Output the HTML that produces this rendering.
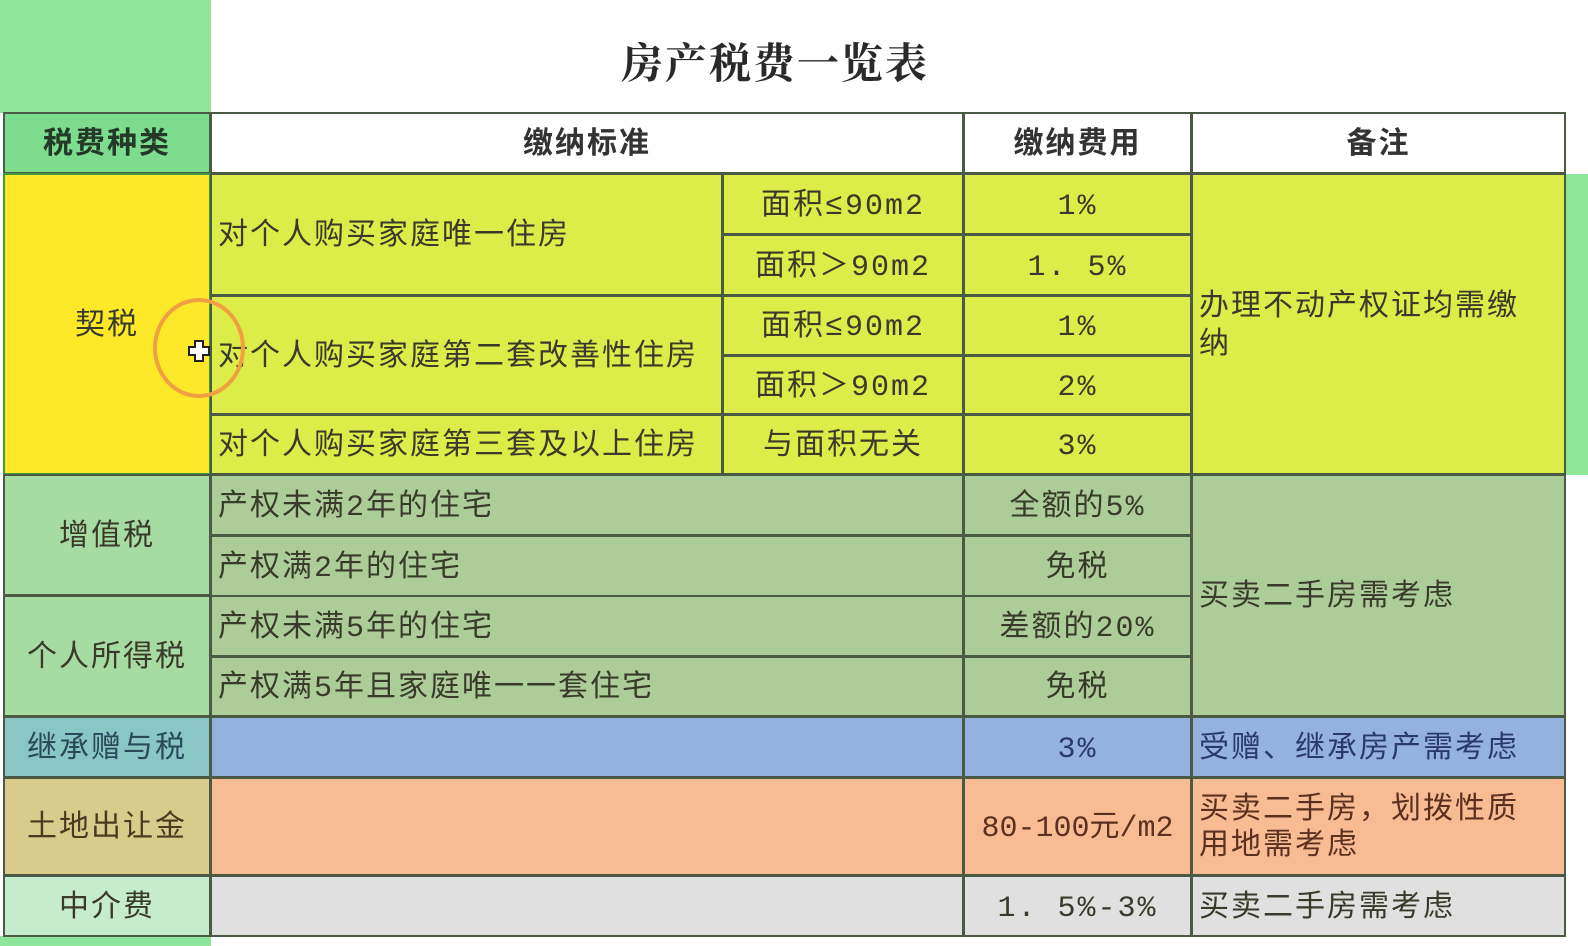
<!DOCTYPE html>
<html><head><meta charset="utf-8"><style>
html,body{margin:0;padding:0;width:1588px;height:946px;overflow:hidden;background:#fff;}
body{position:relative;font-family:"Liberation Mono","Noto Sans CJK SC",monospace;color:#3a3a2a;}
.c{position:absolute;box-sizing:border-box;border:2px solid #4a5a44;margin:-1px 0 0 -1px;display:flex;align-items:center;justify-content:center;font-size:30px;line-height:38px;letter-spacing:2px;padding-top:5px;}
.l{justify-content:flex-start;padding-left:6px;}
.b{font-weight:bold;}
</style></head><body>
<div style="position:absolute;left:0;top:0;width:211px;height:113px;background:#8ee69c"></div>
<div style="position:absolute;left:0;top:936px;width:211px;height:10px;background:#8ee69c"></div>
<div style="position:absolute;left:1566px;top:174px;width:22px;height:301px;background:#8ee89a"></div>
<div style="position:absolute;left:600px;top:26px;width:350px;height:70px;display:flex;align-items:center;justify-content:center;font-size:42px;font-weight:bold;letter-spacing:2px;font-family:'Liberation Serif','Noto Serif CJK SC',serif;color:#2a2a2a">房产税费一览表</div>

<div class="c b" style="left:4px;top:113px;width:208px;height:62px;background:#7ddc8e;color:#243a28">税费种类</div>
<div class="c b" style="left:211px;top:113px;width:754px;height:62px;background:#fff;color:#333">缴纳标准</div>
<div class="c b" style="left:964px;top:113px;width:229px;height:62px;background:#fff;color:#333">缴纳费用</div>
<div class="c b" style="left:1192px;top:113px;width:375px;height:62px;background:#fff;color:#333">备注</div>

<div class="c" style="left:4px;top:174px;width:208px;height:302px;background:#fde92a;border-color:#3f9a3f">契税</div>
<div class="c l" style="left:211px;top:174px;width:513px;height:123px;background:#dcec48">对个人购买家庭唯一住房</div>
<div class="c l" style="left:211px;top:296px;width:513px;height:120px;background:#dcec48">对个人购买家庭第二套改善性住房</div>
<div class="c l" style="left:211px;top:415px;width:513px;height:61px;background:#dcec48">对个人购买家庭第三套及以上住房</div>
<div class="c" style="left:723px;top:174px;width:242px;height:62px;background:#dcec48">面积≤90m2</div>
<div class="c" style="left:723px;top:235px;width:242px;height:62px;background:#dcec48">面积＞90m2</div>
<div class="c" style="left:723px;top:296px;width:242px;height:61px;background:#dcec48">面积≤90m2</div>
<div class="c" style="left:723px;top:356px;width:242px;height:60px;background:#dcec48">面积＞90m2</div>
<div class="c" style="left:723px;top:415px;width:242px;height:61px;background:#dcec48">与面积无关</div>
<div class="c" style="left:964px;top:174px;width:229px;height:62px;background:#dcec48">1%</div>
<div class="c" style="left:964px;top:235px;width:229px;height:62px;background:#dcec48">1. 5%</div>
<div class="c" style="left:964px;top:296px;width:229px;height:61px;background:#dcec48">1%</div>
<div class="c" style="left:964px;top:356px;width:229px;height:60px;background:#dcec48">2%</div>
<div class="c" style="left:964px;top:415px;width:229px;height:61px;background:#dcec48">3%</div>
<div class="c l" style="left:1192px;top:174px;width:375px;height:302px;background:#dcec48;align-items:flex-start;padding-top:114px;padding-right:20px">办理不动产权证均需缴纳</div>
<div style="position:absolute;left:153px;top:298px;width:92px;height:100px;border:4px solid #f0a040;border-radius:50%;box-sizing:border-box"></div>
<svg style="position:absolute;left:187px;top:339px" width="24" height="24" viewBox="0 0 24 24"><path d="M8 2h8v6h6v8h-6v6H8v-6H2V8h6z" fill="#fff" stroke="#222" stroke-width="2"/></svg>

<div class="c" style="left:4px;top:475px;width:208px;height:122px;background:#a6dca2">增值税</div>
<div class="c" style="left:4px;top:596px;width:208px;height:122px;background:#a6dca2">个人所得税</div>
<div class="c l" style="left:211px;top:475px;width:754px;height:62px;background:#adcd98">产权未满2年的住宅</div>
<div class="c l" style="left:211px;top:536px;width:754px;height:62px;background:#adcd98">产权满2年的住宅</div>
<div class="c l" style="left:211px;top:596px;width:754px;height:62px;background:#adcd98">产权未满5年的住宅</div>
<div class="c l" style="left:211px;top:657px;width:754px;height:61px;background:#adcd98">产权满5年且家庭唯一一套住宅</div>
<div class="c" style="left:964px;top:475px;width:229px;height:62px;background:#adcd98">全额的5%</div>
<div class="c" style="left:964px;top:536px;width:229px;height:62px;background:#adcd98">免税</div>
<div class="c" style="left:964px;top:596px;width:229px;height:62px;background:#adcd98">差额的20%</div>
<div class="c" style="left:964px;top:657px;width:229px;height:61px;background:#adcd98">免税</div>
<div class="c l" style="left:1192px;top:475px;width:375px;height:243px;background:#adcd98">买卖二手房需考虑</div>

<div class="c" style="left:4px;top:717px;width:208px;height:62px;background:#8ac6c4;color:#2a4a5a">继承赠与税</div>
<div class="c" style="left:211px;top:717px;width:754px;height:62px;background:#94b2de"></div>
<div class="c" style="left:964px;top:717px;width:229px;height:62px;background:#94b2de;color:#2a3a6a">3%</div>
<div class="c l" style="left:1192px;top:717px;width:375px;height:62px;background:#94b2de;color:#2a3a6a">受赠、继承房产需考虑</div>

<div class="c" style="left:4px;top:778px;width:208px;height:99px;background:#d9cb8c;color:#4a3a20">土地出让金</div>
<div class="c" style="left:211px;top:778px;width:754px;height:99px;background:#f8bc94"></div>
<div class="c" style="left:964px;top:778px;width:229px;height:99px;background:#f8bc94;color:#5a3020;letter-spacing:0">80-100元/m2</div>
<div class="c l" style="left:1192px;top:778px;width:375px;height:99px;background:#f8bc94;color:#5a3020;line-height:36px;padding-right:20px">买卖二手房，划拨性质用地需考虑</div>

<div class="c" style="left:4px;top:876px;width:208px;height:62px;background:#c6ecce">中介费</div>
<div class="c" style="left:211px;top:876px;width:754px;height:62px;background:#e0e0e0"></div>
<div class="c" style="left:964px;top:876px;width:229px;height:62px;background:#e0e0e0">1. 5%-3%</div>
<div class="c l" style="left:1192px;top:876px;width:375px;height:62px;background:#e0e0e0">买卖二手房需考虑</div>
</body></html>
